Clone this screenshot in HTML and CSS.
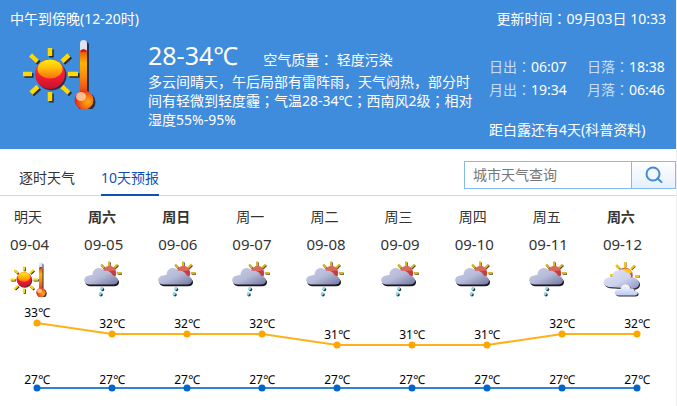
FILE: index.html
```html
<!DOCTYPE html>
<html lang="zh-CN">
<head>
<meta charset="utf-8">
<meta name="viewport" content="width=device-width, initial-scale=1">
<title>天气预报</title>
<link rel="stylesheet" href="styles.css">
</head>
<body>
<svg class="defs" aria-hidden="true">
  <defs>
    <linearGradient id="gSun" x1="0" y1="0" x2="0" y2="1"><stop offset="0" stop-color="#f6442c"/><stop offset=".6" stop-color="#ee1c34"/><stop offset="1" stop-color="#c8102c"/></linearGradient>
    <linearGradient id="gGloss" x1="0" y1="0" x2="0" y2="1"><stop offset="0" stop-color="#ffee10"/><stop offset=".5" stop-color="#ffb808"/><stop offset="1" stop-color="#ff6a10"/></linearGradient>
    <linearGradient id="gTube" x1="0" y1="0" x2="0" y2="1"><stop offset="0" stop-color="#e8480c"/><stop offset=".3" stop-color="#ffb400"/><stop offset=".6" stop-color="#f88a0c"/><stop offset="1" stop-color="#e8341c"/></linearGradient>
    <radialGradient id="gBulb" cx=".7" cy=".6" r=".7"><stop offset="0" stop-color="#ffb010"/><stop offset=".5" stop-color="#f46a14"/><stop offset="1" stop-color="#e01c18"/></radialGradient>
    <linearGradient id="gCloud" x1="0" y1="0" x2="1" y2="1"><stop offset="0" stop-color="#c6cbe6"/><stop offset=".5" stop-color="#b6bbd9"/><stop offset="1" stop-color="#72769e"/></linearGradient>
    <linearGradient id="gPale" x1="0" y1="0" x2="1" y2="1"><stop offset="0" stop-color="#e2e4f6"/><stop offset=".55" stop-color="#cdd2ee"/><stop offset="1" stop-color="#8e94c0"/></linearGradient>
    <linearGradient id="gSmall" x1="0" y1="0" x2="0" y2="1"><stop offset="0" stop-color="#fafaff"/><stop offset="1" stop-color="#bcc8f2"/></linearGradient>
    <path id="raysHot" d="M28 11v8M28 55v9M1 37h9M46 37h10M8.500 18l7 6.500M47 18l-7 6.500M9 56l7-6.500M47 56l-7-6.500"/>
    <path id="cloudShape" d="M10 47C-3 46-3 30 11 29c2-1 4-1 6-1C17 14 33 10 39 19c8-1 16 3 19 10 5 1 10 5 10 10 0 5-4 8-10 8z"/>
    <path id="paleShape" d="M12 52C-3 51-2 34 12 33c2 0 3-1 6 0C19 17 38 13 48 23c5 0 9 4 9 10 6-1 15 4 15 12 0 7-6 10-13 10z"/>
    <path id="smallShape" d="M30 69c-9-1-9-11 1-12 2 0 3 0 4 1 0-13 17-15 20-3 7-1 8 4 8 5 8 0 9 9 0 9z"/>
    <symbol id="hot" viewBox="0 0 76 72" overflow="visible">
      <g fill="none" stroke-width="4.500"><use href="#raysHot" x="1.500" y="1.500" stroke="#26282e"/><use href="#raysHot" stroke="#fcd808"/></g>
      <circle cx="29.500" cy="38.500" r="15" fill="#26304a"/>
      <circle cx="28" cy="37" r="15" fill="url(#gSun)"/>
      <ellipse cx="28" cy="32" rx="12.500" ry="9.500" fill="url(#gGloss)"/>
      <g fill="#26304a"><rect x="60" y="5" width="7" height="56" rx="3"/><circle cx="64" cy="65" r="9.500"/></g>
      <rect x="58" y="3" width="7" height="16" rx="3.500" fill="#dfe1f5"/>
      <path d="M58 14q3.500-3 7 0v44h-7z" fill="url(#gTube)"/>
      <path d="M59 14.500q2.500-2 5 0" stroke="#d01c10" stroke-width="2.500" fill="none"/>
      <circle cx="62" cy="63" r="9.500" fill="url(#gBulb)"/>
      <ellipse cx="59" cy="59.500" rx="5" ry="4.500" fill="#ffd0a0" opacity=".85"/>
    </symbol>
    <symbol id="rain" viewBox="0 0 76 72" overflow="visible">
      <path d="M50 1v9M67 7l-7 7M66 24h9M34 7l6 7" transform="translate(1.500 1.500)" stroke="#4a4426" stroke-width="4"/>
      <path d="M50 1v9M67 7l-7 7M66 24h9M34 7l6 7" stroke="#dcb41c" stroke-width="4"/>
      <circle cx="51" cy="24" r="13.500" fill="#c93c40"/>
      <path d="M39 18a13 13 0 0 1 24 0q-10 4-24 0z" fill="#dc6858"/>
      <use href="#cloudShape" x="2" y="3.500" fill="#141620"/>
      <use href="#cloudShape" fill="url(#gCloud)"/>
      <g fill="#1c3438"><circle cx="37" cy="57" r="3.500"/><circle cx="34" cy="67.500" r="3.500"/></g>
      <path d="M36 54l-1 2M33 64.500l-1 2" stroke="#8fd6ea" stroke-width="5.500" stroke-linecap="round"/>
    </symbol>
    <symbol id="cloudy" viewBox="0 0 76 72" overflow="visible">
      <path d="M44 2v10M26 8l7 7M63 9l-7 7M14 28h9M64 30h9" transform="translate(1 1)" stroke="#4a4020" stroke-width="4"/>
      <path d="M44 2v10M26 8l7 7M63 9l-7 7M14 28h9M64 30h9" stroke="#f0c818" stroke-width="4.500"/>
      <circle cx="44" cy="29" r="15.500" fill="#e8404a"/>
      <path d="M29 26a15.500 14 0 0 1 29-3q-12 9-29 3z" fill="#f8cc10"/>
      <use href="#paleShape" x="2" y="2.500" fill="#2a2c3a"/>
      <use href="#paleShape" fill="url(#gPale)"/>
      <use href="#smallShape" x="2" y="2" fill="#2a2c3a"/>
      <use href="#smallShape" fill="url(#gSmall)"/>
    </symbol>
  </defs>
</svg>
<main class="weather">
  <header class="now">
    <div class="now-top">
      <span>中午到傍晚(12-20时)</span>
      <span>更新时间<span class="mark" lang="ja">：</span>09月03日 10:33</span>
    </div>
    <div class="now-body">
      <svg class="now-icon" role="img" aria-label="热"><use href="#hot"/></svg>
      <section class="summary">
        <div class="summary-head"><strong class="temp">28-34℃</strong><span>空气质量<span class="mark" lang="ja">：</span> 轻度污染</span></div>
        <p class="desc">多云间晴天，午后局部有雷阵雨，天气闷热，部分时间有轻微到轻度霾<span class="mark" lang="ja">；</span>气温28-34℃<span class="mark" lang="ja">；</span>西南风2级<span class="mark" lang="ja">；</span>相对湿度55%-95%</p>
      </section>
      <aside class="astro">
        <dl class="astro-list">
          <div><dt>日出<span class="mark" lang="ja">：</span></dt><dd>06:07</dd></div>
          <div><dt>日落<span class="mark" lang="ja">：</span></dt><dd>18:38</dd></div>
          <div><dt>月出<span class="mark" lang="ja">：</span></dt><dd>19:34</dd></div>
          <div><dt>月落<span class="mark" lang="ja">：</span></dt><dd>06:46</dd></div>
        </dl>
        <a class="term" href="#">距白露还有4天(科普资料)</a>
      </aside>
    </div>
  </header>
  <div class="bar">
    <nav class="tabs">
      <a class="tab" href="#">逐时天气</a>
      <a class="tab active" href="#">10天预报</a>
    </nav>
    <form class="search">
      <input class="search-input" type="text" placeholder="城市天气查询" aria-label="城市天气查询">
      <button class="search-button" type="button" aria-label="查询">
        <svg width="18" height="18" viewBox="0 0 18 18" fill="none" stroke="#3f8cdc" stroke-width="2"><circle cx="8" cy="8" r="6.500"/><path d="M12.500 12.500l4 3.500" stroke-linecap="round"/></svg>
      </button>
    </form>
  </div>
  <ol class="days">
    <li class="day"><span class="name">明天</span><span class="date">09-04</span><svg class="icon"><use href="#hot"/></svg></li>
    <li class="day"><span class="name weekend">周六</span><span class="date">09-05</span><svg class="icon"><use href="#rain"/></svg></li>
    <li class="day"><span class="name weekend">周日</span><span class="date">09-06</span><svg class="icon"><use href="#rain"/></svg></li>
    <li class="day"><span class="name">周一</span><span class="date">09-07</span><svg class="icon"><use href="#rain"/></svg></li>
    <li class="day"><span class="name">周二</span><span class="date">09-08</span><svg class="icon"><use href="#rain"/></svg></li>
    <li class="day"><span class="name">周三</span><span class="date">09-09</span><svg class="icon"><use href="#rain"/></svg></li>
    <li class="day"><span class="name">周四</span><span class="date">09-10</span><svg class="icon"><use href="#rain"/></svg></li>
    <li class="day"><span class="name">周五</span><span class="date">09-11</span><svg class="icon"><use href="#rain"/></svg></li>
    <li class="day"><span class="name weekend">周六</span><span class="date">09-12</span><svg class="icon"><use href="#cloudy"/></svg></li>
  </ol>
  <svg class="chart" viewBox="0 0 676 104" role="img" aria-label="气温">
    <polyline class="line high" points="37,21 112,32 187,32 262,32 337,43 412,43 487,43 562,32 637,32"/>
    <polyline class="line low" points="37,86 637,86"/>
    <g class="dots high-dots">
      <circle cx="37" cy="21" r="3.500"/><circle cx="112" cy="32" r="3.500"/><circle cx="187" cy="32" r="3.500"/><circle cx="262" cy="32" r="3.500"/><circle cx="337" cy="43" r="3.500"/><circle cx="412" cy="43" r="3.500"/><circle cx="487" cy="43" r="3.500"/><circle cx="562" cy="32" r="3.500"/><circle cx="637" cy="32" r="3.500"/>
    </g>
    <g class="dots low-dots">
      <circle cx="37" cy="86" r="3.500"/><circle cx="112" cy="86" r="3.500"/><circle cx="187" cy="86" r="3.500"/><circle cx="262" cy="86" r="3.500"/><circle cx="337" cy="86" r="3.500"/><circle cx="412" cy="86" r="3.500"/><circle cx="487" cy="86" r="3.500"/><circle cx="562" cy="86" r="3.500"/><circle cx="637" cy="86" r="3.500"/>
    </g>
    <g class="labels">
      <text x="37" y="15">33℃</text><text x="112" y="26">32℃</text><text x="187" y="26">32℃</text><text x="262" y="26">32℃</text><text x="337" y="37">31℃</text><text x="412" y="37">31℃</text><text x="487" y="37">31℃</text><text x="562" y="26">32℃</text><text x="637" y="26">32℃</text>
      <text x="37" y="82">27℃</text><text x="112" y="82">27℃</text><text x="187" y="82">27℃</text><text x="262" y="82">27℃</text><text x="337" y="82">27℃</text><text x="412" y="82">27℃</text><text x="487" y="82">27℃</text><text x="562" y="82">27℃</text><text x="637" y="82">27℃</text>
    </g>
  </svg>
</main>
</body>
</html>
```
FILE: styles.css
```css
* { box-sizing: border-box; }
body {
  margin: 0;
  background: #fff;
  color: #333;
  font: 14px/20px "Noto Sans", "Noto Sans CJK SC", sans-serif;
}
a { color: inherit; text-decoration: none; }
.defs { position: absolute; width: 0; height: 0; }
.weather { border-right: 1px solid #eee; }
/* Full-width marks centred in their cell */
.mark { font-family: "Noto Sans CJK JP", sans-serif; line-height: 1; }

.now {
  padding: 9px 10px;
  background: #3f8cdc;
  color: #fff;
}
.now-top { display: flex; justify-content: space-between; }
.now-body { display: flex; padding-top: 8px; }
.now-icon { flex: none; width: 76px; height: 72px; margin: 0 50px 0 12px; }
.summary { flex: none; width: 332px; padding-top: 4px; }
.summary-head { display: flex; align-items: baseline; gap: 25px; line-height: 28px; }
.temp { font-size: 25px; font-weight: 400; }
.desc { margin: -2px 0 0; line-height: 19px; }
.astro { flex: 1; padding: 18px 0 0 9px; white-space: nowrap; }
.astro-list {
  display: grid;
  grid-template-columns: 98px auto;
  justify-content: start;
  margin: 0 0 19px;
  line-height: 23px;
}
.astro-list div { display: flex; }
.astro-list dt { color: #c8def5; }
.astro-list dd { margin: 0; }
.term { display: block; }

.bar {
  display: flex;
  justify-content: space-between;
  align-items: flex-end;
  border-bottom: 1px solid #c5dcf2;
  padding: 12px 0 0 19px;
}
.tabs { display: flex; gap: 26px; }
.tab { height: 28px; margin-bottom: -1px; }
.tab.active { color: #104fb4; border-bottom: 2px solid #104fb4; }
.search { display: flex; height: 28px; margin-bottom: 6px; }
.search-input {
  width: 168px;
  padding: 0 8px;
  border: 1px solid #84bcf0;
  border-radius: 0;
  font: inherit;
}
.search-input::placeholder { color: #777; opacity: 1; }
.search-button {
  width: 44px;
  padding: 0;
  border: 1px solid #84bcf0;
  border-left: 0;
  background: linear-gradient(#fff, #e4f0fc);
}
.search-button svg { display: block; margin: 0 auto; }

.days {
  display: grid;
  grid-template-columns: repeat(9, 1fr);
  margin: 0;
  padding: 10px 9px 5px 0;
  list-style: none;
}
.day { display: flex; flex-direction: column; align-items: flex-start; padding-left: 10px; }
.name { padding-left: 4px; line-height: 22px; }
.weekend { font-weight: 700; }
.date { font-size: 15px; line-height: 33px; }
.icon { width: 38px; height: 36px; }

.chart { display: block; width: 100%; height: auto; }
.line { fill: none; stroke-width: 2; }
.high { stroke: #ffb01a; }
.low { stroke: #2f84d8; }
.high-dots { fill: #ffa500; }
.low-dots { fill: #0066cc; }
.labels { fill: #000; font-size: 12px; text-anchor: middle; }
```
